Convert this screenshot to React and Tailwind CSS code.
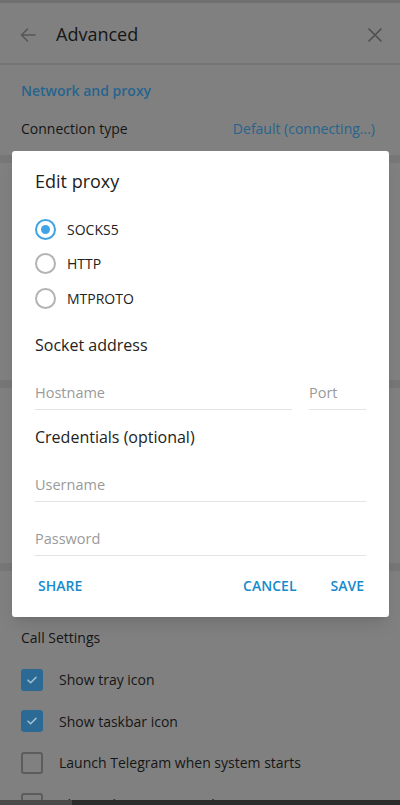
import React from 'react';

// --- fondo: ajustes "Advanced" atenuados por el modal ---
const Checkbox = ({ checked, label }) => (
  <div className="h-[41.5px] flex items-center px-[21px]">
    {checked ? (
      <div className="w-[22px] h-[22px] rounded-[3px] bg-[#2b6a94] flex items-center justify-center">
        <svg width="14" height="14" viewBox="0 0 14 14" fill="none">
          <path d="M3 7.2l2.6 2.6L11 4.4" stroke="#9fbdd1" strokeWidth="1.6" strokeLinecap="round" strokeLinejoin="round" />
        </svg>
      </div>
    ) : (
      <div className="w-[22px] h-[22px] rounded-[3px] border-2 border-[#5c5c5c]" />
    )}
    <span className="ml-[16px] text-[14px] text-[#161616]">{label}</span>
  </div>
);

const Band = () => <div className="h-[8px] bg-[#777777]" />;

const Radio = ({ checked, label }) => (
  <div className="h-[34.5px] flex items-center">
    {checked ? (
      <div className="w-[21px] h-[21px] rounded-full border-2 border-[#40a3e6] flex items-center justify-center">
        <div className="w-[9px] h-[9px] rounded-full bg-[#40a3e6]" />
      </div>
    ) : (
      <div className="w-[21px] h-[21px] rounded-full border-2 border-[#b3b3b3]" />
    )}
    <span className="ml-[11px] text-[14px] text-[#222]">{label}</span>
  </div>
);

const Field = ({ placeholder, className = '' }) => (
  <div className={`h-[36px] pt-[3px] flex items-center border-b border-[#e3e3e3] ${className}`}>
    <span className="text-[14.5px] text-[#9a9a9a]">{placeholder}</span>
  </div>
);

export default function App() {
  return (
    <div className="relative w-[400px] h-[805px] overflow-hidden bg-[#808080]" style={{ fontFamily: '"Open Sans", "Noto Sans", sans-serif' }}>
      {/* CABECERA */}
      <div className="h-[3px] bg-[#707070]" />
      <div className="h-[60px] flex items-center px-[19px] pt-[3px]">
        <svg width="18" height="18" viewBox="0 0 18 18" fill="none">
          <path d="M16 9H2.5M8.5 3L2.5 9l6 6" stroke="#575757" strokeWidth="1.6" strokeLinecap="round" strokeLinejoin="round" />
        </svg>
        <h1 className="ml-[19px] text-[18px] font-medium text-[#151515]">Advanced</h1>
        <svg className="ml-auto -mr-[2px]" width="16" height="16" viewBox="0 0 16 16" fill="none">
          <path d="M2 2l12 12M14 2L2 14" stroke="#505050" strokeWidth="1.7" strokeLinecap="round" />
        </svg>
      </div>
      <div className="h-[2px] bg-[#747474]" />

      {/* RED Y PROXY */}
      <div className="px-[21px] pt-[15px] pb-[15px]">
        <p className="text-[14px] leading-[22px] font-semibold text-[#27648d]">Network and proxy</p>
        <div className="mt-[16px] flex items-center justify-between text-[14px] leading-[22px]">
          <span className="text-[#161616]">Connection type</span>
          <span className="text-[#27648d] mr-[4px]">Default (connecting...)</span>
        </div>
      </div>
      <Band />
      <div className="h-[217px]" />
      <Band />
      <div className="h-[175px]" />
      <Band />
      <div className="h-[56px]" />
      <div className="px-[21px]">
        <p className="text-[14px] leading-[22px] text-[#161616]">Call Settings</p>
      </div>
      <div className="mt-[10px]">
        <Checkbox checked label="Show tray icon" />
        <Checkbox checked label="Show taskbar icon" />
        <Checkbox label="Launch Telegram when system starts" />
        <Checkbox label={'Place Telegram in \u201CSend to\u201D menu'} />
      </div>

      {/* barra inferior */}
      <div className="absolute left-0 right-0 bottom-0 h-[5px] bg-[#2b2b2b]">
        <div className="w-[72px] h-full bg-[#4a4a4a]" />
      </div>

      {/* MODAL: EDITAR PROXY */}
      <div className="absolute left-[12px] top-[151px] w-[377px] bg-white rounded-[3px] shadow-lg">
        <div className="px-[23px] pt-[18px]">
          <h2 className="text-[18px] leading-[24px] font-medium text-[#222]">Edit proxy</h2>
          <div className="mt-[19px]">
            <Radio checked label="SOCKS5" />
            <Radio label="HTTP" />
            <Radio label="MTPROTO" />
          </div>
          <h3 className="mt-[18px] text-[16px] leading-[22px] font-medium text-[#222]">Socket address</h3>
          <div className="mt-[18px] flex gap-[17px]">
            <Field placeholder="Hostname" className="flex-1" />
            <Field placeholder="Port" className="w-[57px]" />
          </div>
          <h3 className="mt-[16px] text-[16px] leading-[22px] font-medium text-[#222]">Credentials (optional)</h3>
          <Field placeholder="Username" className="mt-[18px]" />
          <Field placeholder="Password" className="mt-[18px]" />
        </div>
        <div className="mt-[12px] mb-[13px] pl-[14px] pr-[13px] h-[36px] flex items-center text-[14px] font-semibold text-[#168acd]">
          <button className="px-[12px] h-full">SHARE</button>
          <button className="ml-auto px-[12px] h-full">CANCEL</button>
          <button className="ml-[10px] px-[12px] h-full">SAVE</button>
        </div>
      </div>
    </div>
  );
}
